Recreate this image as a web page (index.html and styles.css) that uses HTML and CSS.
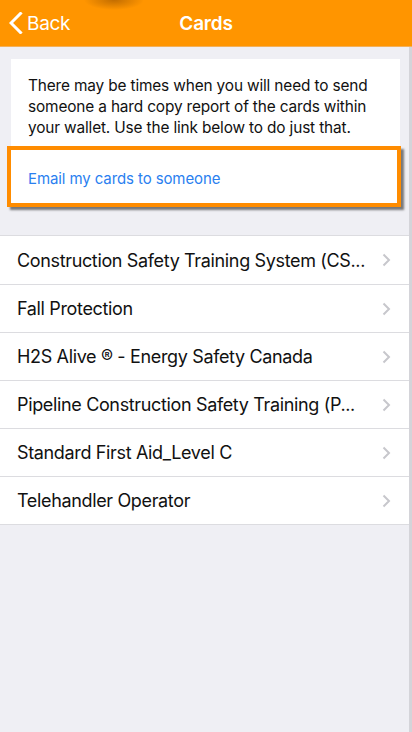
FILE: index.html
```html
<!DOCTYPE html>
<html>
<head>
<meta charset="utf-8">
<link rel="stylesheet" href="styles.css">
</head>
<body>
<div class="screen">
  <header class="nav">
    <div class="back">
      <svg class="back-icon" width="14" height="22" viewBox="0 0 14 22"><path d="M11.5 1.5 L2 11 L11.5 20.5" fill="none" stroke="#fff" stroke-width="3" stroke-linecap="square" stroke-linejoin="miter"/></svg>
      <span>Back</span>
    </div>
    <div class="title">Cards</div>
    <div></div>
  </header>
  <main class="content">
    <section class="card">
      <p class="intro">There may be times when you will need to send someone a hard copy report of the cards within your wallet. Use the link below to do just that.</p>
      <div class="email-box"><span class="email-link">Email my cards to someone</span></div>
    </section>
    <ul class="list">
      <li class="row"><span class="label">Construction Safety Training System (CS...</span><svg class="chev" width="9" height="14" viewBox="0 0 9 14"><path d="M1.5 1.5 L7 7 L1.5 12.5" fill="none" stroke="#c7c7cc" stroke-width="2"/></svg></li>
      <li class="row"><span class="label">Fall Protection</span><svg class="chev" width="9" height="14" viewBox="0 0 9 14"><path d="M1.5 1.5 L7 7 L1.5 12.5" fill="none" stroke="#c7c7cc" stroke-width="2"/></svg></li>
      <li class="row"><span class="label">H2S Alive ® - Energy Safety Canada</span><svg class="chev" width="9" height="14" viewBox="0 0 9 14"><path d="M1.5 1.5 L7 7 L1.5 12.5" fill="none" stroke="#c7c7cc" stroke-width="2"/></svg></li>
      <li class="row"><span class="label">Pipeline Construction Safety Training (P...</span><svg class="chev" width="9" height="14" viewBox="0 0 9 14"><path d="M1.5 1.5 L7 7 L1.5 12.5" fill="none" stroke="#c7c7cc" stroke-width="2"/></svg></li>
      <li class="row"><span class="label">Standard First Aid_Level C</span><svg class="chev" width="9" height="14" viewBox="0 0 9 14"><path d="M1.5 1.5 L7 7 L1.5 12.5" fill="none" stroke="#c7c7cc" stroke-width="2"/></svg></li>
      <li class="row"><span class="label">Telehandler Operator</span><svg class="chev" width="9" height="14" viewBox="0 0 9 14"><path d="M1.5 1.5 L7 7 L1.5 12.5" fill="none" stroke="#c7c7cc" stroke-width="2"/></svg></li>
    </ul>
  </main>
</div>
</body>
</html>
```

FILE: styles.css
```css
* { box-sizing: border-box; }
html, body { margin: 0; padding: 0; }
body {
  width: 412px;
  height: 732px;
  overflow: hidden;
  background: #efeff4;
  font-family: Inter, "Liberation Sans", Arial, sans-serif;
  color: #000;
}
.screen {
  height: 732px;
  border-right: 3px solid #d4d4d9;
  display: flex;
  flex-direction: column;
}
.nav {
  height: 47px;
  flex: none;
  background: radial-gradient(ellipse 30px 10px at 114px 0px, rgba(120,60,0,0.45), rgba(255,149,0,0) 100%), #ff9500;
  border-bottom: 1px solid #f3b05a;
  display: grid;
  grid-template-columns: 1fr auto 1fr;
  align-items: center;
  color: #fff;
  margin-right: -3px;
}
.back {
  display: flex;
  align-items: center;
  gap: 4px;
  padding-left: 9px;
  font-size: 19px;
  letter-spacing: -0.3px;
}
.back-icon { display: block; }
.title {
  font-size: 19px;
  font-weight: 600;
  letter-spacing: -0.2px;
}
.content {
  flex: 1;
  display: flex;
  flex-direction: column;
}
.card {
  margin: 12px 9px 0 11px;
  background: #fff;
  display: flex;
  flex-direction: column;
}
.intro {
  margin: 0;
  padding: 16px 17px 8px 17px;
  font-size: 15.4px;
  line-height: 21px;
  letter-spacing: -0.15px;
  color: #111;
}
.email-box {
  margin: 0 -1px 0 -4px;
  height: 61px;
  border: 4px solid #ff8c00;
  background: #fff;
  box-shadow: 3px 3px 2px rgba(40,40,40,0.6);
  display: flex;
  align-items: center;
  padding-left: 17px;
  padding-top: 3px;
}
.email-link {
  color: #2a7ff0;
  font-size: 15px;
  letter-spacing: -0.1px;
}
.list {
  list-style: none;
  margin: 28px 0 0 0;
  padding: 0;
  background: #fff;
  border-top: 1px solid #dcdce0;
  border-bottom: 1px solid #dcdce0;
}
.row {
  height: 48px;
  display: flex;
  align-items: center;
  padding: 0 18px 0 17px;
  gap: 8px;
}
.row + .row { border-top: 1px solid #dcdce0; }
.label {
  flex: 1;
  min-width: 0;
  white-space: nowrap;
  font-size: 18px;
  letter-spacing: -0.35px;
  color: #111;
}
.chev { flex: none; display: block; }
```
